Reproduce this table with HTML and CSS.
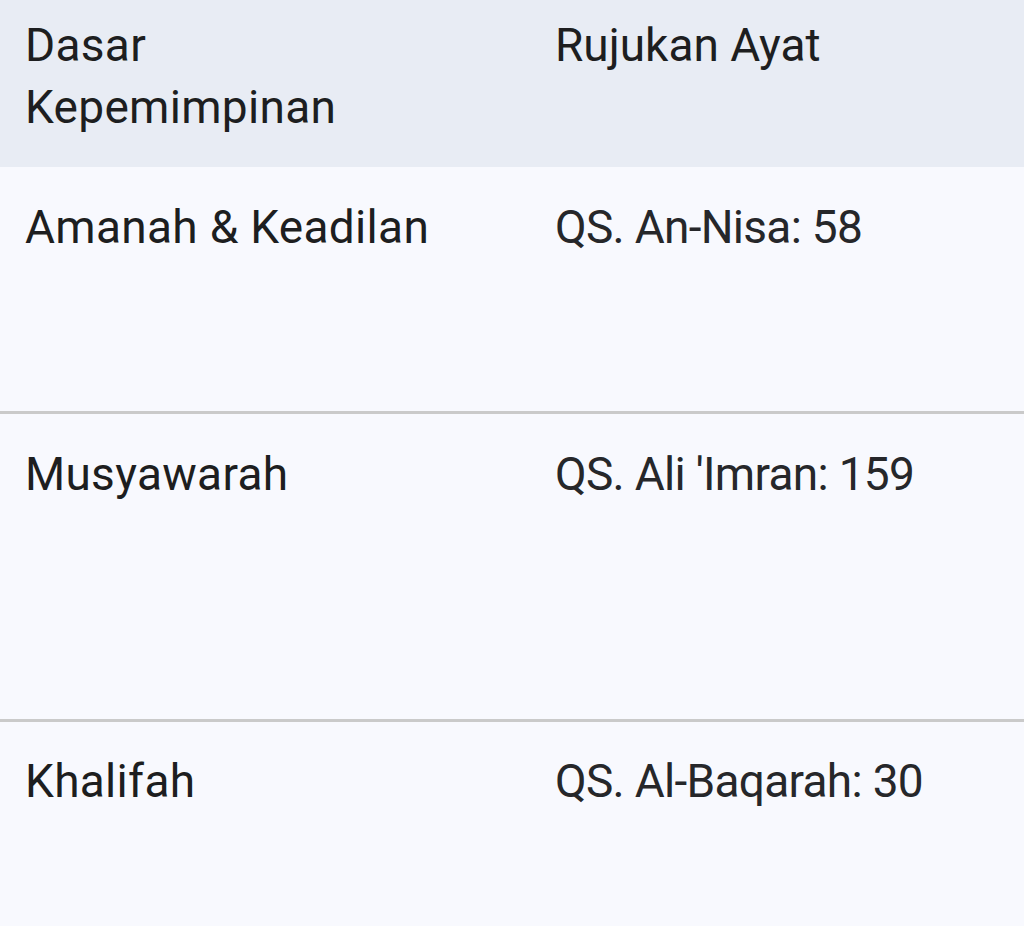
FILE: index.html
```html
<!DOCTYPE html>
<html lang="id">
<head>
<meta charset="utf-8">
<link rel="stylesheet" href="styles.css">
</head>
<body>
<table class="tbl">
  <thead>
    <tr class="head">
      <th class="c1">Dasar<br>Kepemimpinan</th>
      <th class="c2">Rujukan Ayat</th>
    </tr>
  </thead>
  <tbody>
    <tr class="row r1">
      <td class="c1">Amanah &amp; Keadilan</td>
      <td class="c2 ref">QS. An-Nisa: 58</td>
    </tr>
    <tr class="row r2">
      <td class="c1">Musyawarah</td>
      <td class="c2 ref">QS. Ali 'Imran: 159</td>
    </tr>
    <tr class="row r3">
      <td class="c1">Khalifah</td>
      <td class="c2 ref">QS. Al-Baqarah: 30</td>
    </tr>
  </tbody>
</table>
</body>
</html>
```

FILE: styles.css
```css
html, body {
  margin: 0;
  padding: 0;
  background: #f8f9fe;
}
body {
  font-family: Roboto, "Noto Sans", sans-serif;
  color: #1d1e20;
  font-size: 46px;
  line-height: 62px;
}
.tbl {
  width: 1024px;
  border-collapse: collapse;
  table-layout: fixed;
}
.c1 { width: 530px; padding-left: 25px; letter-spacing: 0.3px; }
.c2 { padding-left: 25px; }
.tbl th, .tbl td {
  text-align: left;
  vertical-align: top;
  font-weight: 400;
  padding-right: 0;
  box-sizing: border-box;
}
.head th {
  background: #e8ecf4;
  padding-top: 14px;
  padding-bottom: 29px;
  height: 167px;
}
.row td {
  padding-top: 29px;
  padding-bottom: 0;
}
.r1 td { height: 245px; border-bottom: 3px solid #cacaca; }
.r2 td { height: 308px; border-bottom: 3px solid #cacaca; padding-top: 29px; }
.r3 td { height: 206px; padding-top: 28px; }
.ref { color: #26272a; letter-spacing: -0.7px; }
```
